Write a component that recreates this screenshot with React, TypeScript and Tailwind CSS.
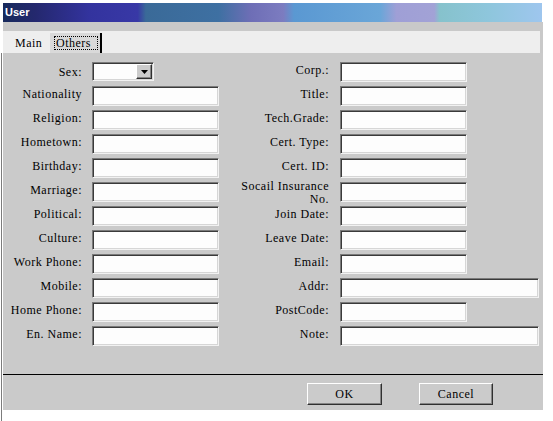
import React from "react";

const sunken =
  "bg-[#fdfdfd] border border-t-[#7a7a7a] border-l-[#7a7a7a] border-b-[#f2f2f2] border-r-[#f2f2f2] shadow-[inset_1px_1px_0_#3a3a3a,inset_-1px_-1px_0_#d6d6d6]";

const raised =
  "bg-[#cbcbcb] border border-t-white border-l-white border-b-[#303030] border-r-[#303030] shadow-[inset_-1px_-1px_0_#858585]";

type Row = { label: string; wide?: boolean; two?: [string, string] };

const leftRows: Row[] = [
  { label: "Nationality" },
  { label: "Religion:" },
  { label: "Hometown:" },
  { label: "Birthday:" },
  { label: "Marriage:" },
  { label: "Political:" },
  { label: "Culture:" },
  { label: "Work Phone:" },
  { label: "Mobile:" },
  { label: "Home Phone:" },
  { label: "En. Name:" },
];

const rightRows: Row[] = [
  { label: "Corp.:" },
  { label: "Title:" },
  { label: "Tech.Grade:" },
  { label: "Cert. Type:" },
  { label: "Cert. ID:" },
  { label: "", two: ["Socail Insurance", "No."] },
  { label: "Join Date:" },
  { label: "Leave Date:" },
  { label: "Email:" },
  { label: "Addr:", wide: true },
  { label: "PostCode:" },
  { label: "Note:", wide: true },
];

export default function App() {
  return (
    <div className="w-[553px] h-[421px] bg-white flex font-['Liberation_Serif',serif] text-[12px] tracking-[0.5px] text-black overflow-hidden">
      <div className="w-[3px] pt-[53px] flex">
        <div className="ml-[1px] w-[1px] h-full bg-[#7c7c7c]" />
      </div>
      <div className="w-[540px] mt-[3px] h-[407px] flex flex-col">
        {/* Title bar */}
        <div className="h-[19px] w-[539px] flex items-center pl-[2px] bg-[linear-gradient(to_right,#172a5c_0%,#24286e_6%,#33339e_16%,#3838a6_25%,#3a6a98_26.5%,#3e70a2_40%,#6e6eb6_46%,#7c7cc0_52%,#5a98d2_54%,#6aa6d8_70%,#9f9fd6_73%,#a2a2d6_80%,#86c2cc_81%,#8ec6dc_90%,#9ec6ee_100%)]">
          <span className="font-['Liberation_Sans',Arial,sans-serif] font-bold text-[11px] tracking-normal text-white leading-none">
            User
          </span>
        </div>
        {/* gray strip */}
        <div className="h-[9px] bg-[#c9c9c9]" />
        {/* tab strip */}
        <div className="h-[22px] flex bg-[#c9c9c9]">
          <div className="w-[537px] bg-[#eeeeee] flex">
            <div className="w-[47px] pl-[12px] pt-[5px] leading-[14px]">Main</div>
            <div className="mt-[2px] w-[52px] bg-[#d9d9d9] border-r-[2px] border-black pl-[4px] pt-[3px]">
              <div className="border border-dotted border-black w-[44px] h-[14px] leading-[12px] pl-[1px] whitespace-nowrap">
                Others
              </div>
            </div>
          </div>
        </div>
        {/* panel */}
        <div className="flex-1 bg-[#cacaca] pt-[9px] flex">
          <div className="w-[216px] flex flex-col gap-[4px]">
            <div className="h-[20px] flex items-start">
              <div className="w-[79px] text-right leading-[14px] pt-[3px]">Sex:</div>
              <div className={`ml-[10px] w-[62px] h-[19px] flex justify-end items-start p-[1px] ${sunken}`}>
                <div className={`w-[16px] h-[15px] flex items-center justify-center ${raised}`}>
                  <svg width="7" height="4" viewBox="0 0 7 4">
                    <polygon points="0,0 7,0 3.5,4" fill="#000" />
                  </svg>
                </div>
              </div>
            </div>
            {leftRows.map((r) => (
              <div key={r.label} className="h-[20px] flex items-start">
                <div className="w-[79px] text-right leading-[14px] pt-[1px] whitespace-nowrap">
                  {r.label}
                </div>
                <div className={`ml-[10px] w-[127px] h-[20px] ${sunken}`} />
              </div>
            ))}
          </div>
          <div className="flex flex-col gap-[4px]">
            {rightRows.map((r, i) => (
              <div key={i} className="h-[20px] flex items-start">
                <div className="w-[110px] text-right leading-[14px] pt-[1px] whitespace-nowrap">
                  {r.two ? (
                    <div className="-mt-[3px] leading-[13px]">
                      <div>{r.two[0]}</div>
                      <div>{r.two[1]}</div>
                    </div>
                  ) : (
                    r.label
                  )}
                </div>
                <div
                  className={`ml-[11px] ${r.wide ? "w-[199px]" : "w-[127px]"} h-[20px] ${sunken}`}
                />
              </div>
            ))}
          </div>
        </div>
        {/* separator */}
        <div className="h-[1px] bg-black" />
        {/* bottom */}
        <div className="h-[35px] bg-[#cacaca] flex items-start pt-[8px] pl-[304px]">
          <div className={`w-[75px] h-[22px] flex items-center justify-center leading-none ${raised}`}>
            OK
          </div>
          <div className={`ml-[37px] w-[74px] h-[22px] flex items-center justify-center leading-none ${raised}`}>
            Cancel
          </div>
        </div>
      </div>
    </div>
  );
}
